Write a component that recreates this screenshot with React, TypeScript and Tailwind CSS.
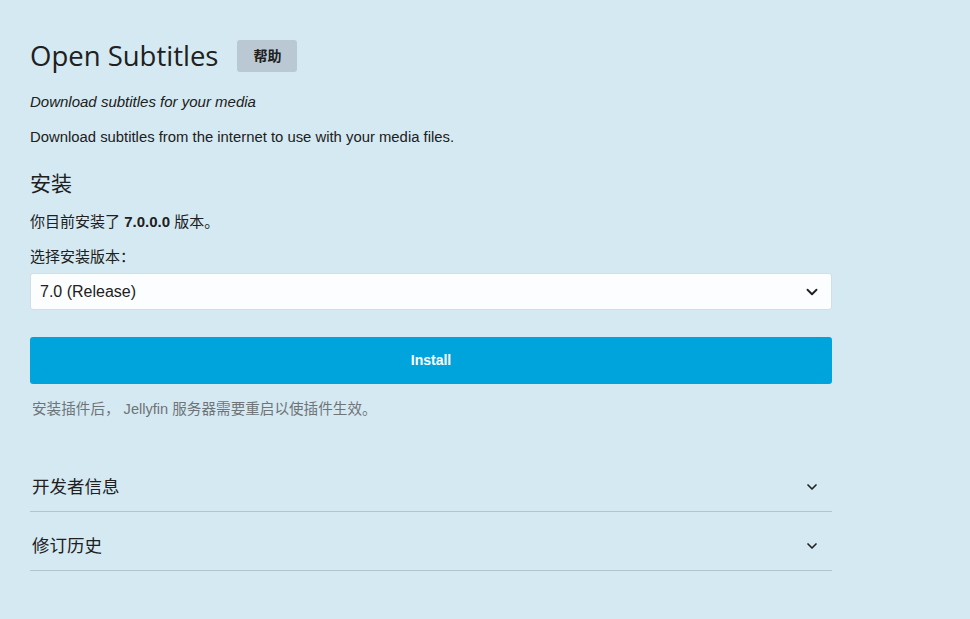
import { ChevronDown } from "lucide-react";

const font = { fontFamily: '"Liberation Sans", Arial, "Noto Sans CJK SC", sans-serif' };

const Section = ({ title }: { title: string }) => (
  <div className="flex items-center justify-between border-b border-[#b4c4cc] pl-[2px] pr-[12px] h-[59px] pt-[10px]">
    <span className="text-[17.5px] text-[#202020]">{title}</span>
    <ChevronDown className="w-[16px] h-[16px] text-[#202020]" strokeWidth={2.5} />
  </div>
);

export default function App() {
  return (
    <div
      className="min-h-[619px] w-full bg-[#d5e9f2] text-[#202020] pl-[30px] pr-[138px] pt-[40px]"
      style={font}
    >
      <div className="flex items-center gap-[19px]">
        <h1
          className="text-[27.5px] leading-[32px] text-[#202020]"
          style={{ fontFamily: '"Open Sans", "Noto Sans", sans-serif' }}
        >
          Open Subtitles
        </h1>
        <button className="h-[32px] w-[60px] rounded-[3px] bg-[#b9c8d3] text-[14px] font-bold text-[#202020]">
          帮助
        </button>
      </div>

      <p className="mt-[21px] text-[15px] italic leading-[18px]">Download subtitles for your media</p>
      <p className="mt-[17px] text-[14.85px] leading-[18px]">
        Download subtitles from the internet to use with your media files.
      </p>

      <h2 className="mt-[25px] text-[21px] leading-[26px]">安装</h2>
      <p className="mt-[16px] text-[15px] leading-[18px]">
        你目前安装了 <b>7.0.0.0</b> 版本。
      </p>

      <label className="mt-[17px] block text-[15px] leading-[18px]">选择安装版本：</label>
      <div className="mt-[7px] flex h-[37px] items-center justify-between rounded-[3px] border border-[#d3dde2] bg-[#fcfdff] pl-[9px] pr-[10px]">
        <span className="text-[16px]">7.0 (Release)</span>
        <ChevronDown className="w-[18px] h-[18px] text-[#202020]" strokeWidth={2.5} />
      </div>

      <button className="mt-[27px] flex h-[47px] w-full items-center justify-center rounded-[3px] bg-[#00a4dc] text-[14px] font-bold text-white">
        Install
      </button>

      <p className="mt-[16px] pl-[2px] text-[14.6px] leading-[18px] text-[#6f7478]">
        安装插件后，&nbsp;Jellyfin 服务器需要重启以使插件生效。
      </p>

      <div className="mt-[35px]">
        <Section title="开发者信息" />
        <Section title="修订历史" />
      </div>
    </div>
  );
}
